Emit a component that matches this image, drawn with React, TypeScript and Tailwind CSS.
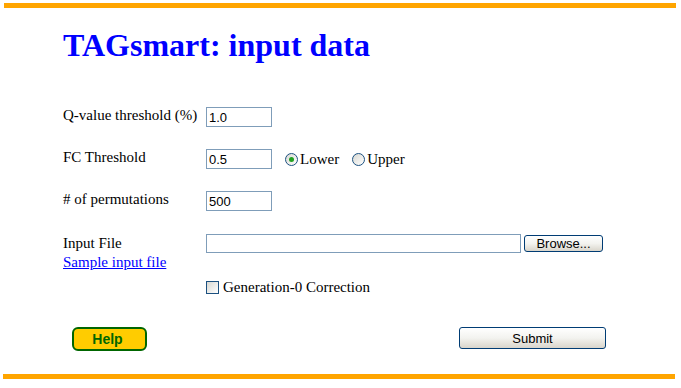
import React from "react";

const serif = { fontFamily: '"Liberation Serif", "Times New Roman", serif' };

function Radio({ checked }: { checked?: boolean }) {
  return (
    <span className="flex h-[13px] w-[13px] items-center justify-center rounded-full border border-[#1c5180] bg-gradient-to-br from-[#d8d8d2] to-[#ffffff]">
      {checked && <span className="block h-[5px] w-[5px] rounded-full bg-[#21a121]" />}
    </span>
  );
}

const inputCls =
  "h-[20px] w-[66px] border border-[#7f9db9] bg-white px-[2px] text-[13px] leading-[18px] text-black outline-none font-['Liberation_Sans',Arial,sans-serif]";

const xpBtn =
  "rounded-[3px] border border-[#003c74] bg-gradient-to-b from-[#ffffff] via-[#f3f3ef] to-[#d9d5cb] text-[13px] text-black font-['Liberation_Sans',Arial,sans-serif] leading-none";

export default function App() {
  return (
    <div className="w-[681px] h-[388px] bg-white pt-[3px]" style={serif}>
      <div className="ml-[4px] h-[5px] w-[672px] bg-[#ffa500]" />
      <div className="pl-[63px]">
        <h1 className="mt-[19px] text-[32px] font-bold leading-[36px] text-[#0000ff]" style={serif}>
          TAGsmart: input data
        </h1>

        <div className="mt-[44px] flex items-start">
          <div className="w-[143px] text-[15px] leading-[17px] text-black">Q-value threshold (%)</div>
          <input className={inputCls} defaultValue="1.0" />
        </div>

        <div className="mt-[22px] flex items-start">
          <div className="w-[143px] text-[15px] leading-[17px] text-black">FC Threshold</div>
          <input className={inputCls} defaultValue="0.5" />
          <div className="ml-[13px] flex h-[20px] items-center text-[15px] leading-[17px] text-black">
            <Radio checked />
            <span className="ml-[2px] pt-[1px]">Lower</span>
            <span className="ml-[13px]">
              <Radio />
            </span>
            <span className="ml-[2px] pt-[1px]">Upper</span>
          </div>
        </div>

        <div className="mt-[22px] flex items-start">
          <div className="w-[143px] text-[15px] leading-[17px] text-black">
            # of permutations
          </div>
          <input className={inputCls} defaultValue="500" />
        </div>

        <div className="mt-[23px] flex items-start">
          <div className="w-[143px] text-[15px] leading-[19px] text-black">
            <div>Input File</div>
            <a href="#" className="text-[#0000ff] underline">
              Sample input file
            </a>
          </div>
          <div className="flex items-start">
            <div className="h-[19px] w-[315px] border border-[#7f9db9] bg-white" />
            <button className={`ml-[3px] mt-[1px] h-[17px] w-[79px] ${xpBtn}`}>Browse...</button>
          </div>
        </div>

        <div className="mt-[7px] flex h-[17px] items-center">
          <div className="w-[143px]" />
          <span className="block h-[13px] w-[13px] border border-[#1c5180] bg-gradient-to-br from-[#d8d8d2] to-[#ffffff]" />
          <span className="ml-[4px] text-[15px] leading-[17px] text-black">Generation-0 Correction</span>
        </div>

        <div className="mt-[31px] flex items-start">
          <button className="ml-[9px] flex h-[24px] w-[75px] items-center justify-center rounded-[6px] border-2 border-[#006600] bg-[#ffcc00] pr-[4px] text-[14px] font-bold text-[#006600] font-['Liberation_Sans',Arial,sans-serif]">
            Help
          </button>
          <button className={`ml-[312px] h-[22px] w-[147px] ${xpBtn}`}>Submit</button>
        </div>
      </div>
      <div className="ml-[3px] mt-[23px] h-[5px] w-[672px] bg-[#ffa500]" />
    </div>
  );
}
